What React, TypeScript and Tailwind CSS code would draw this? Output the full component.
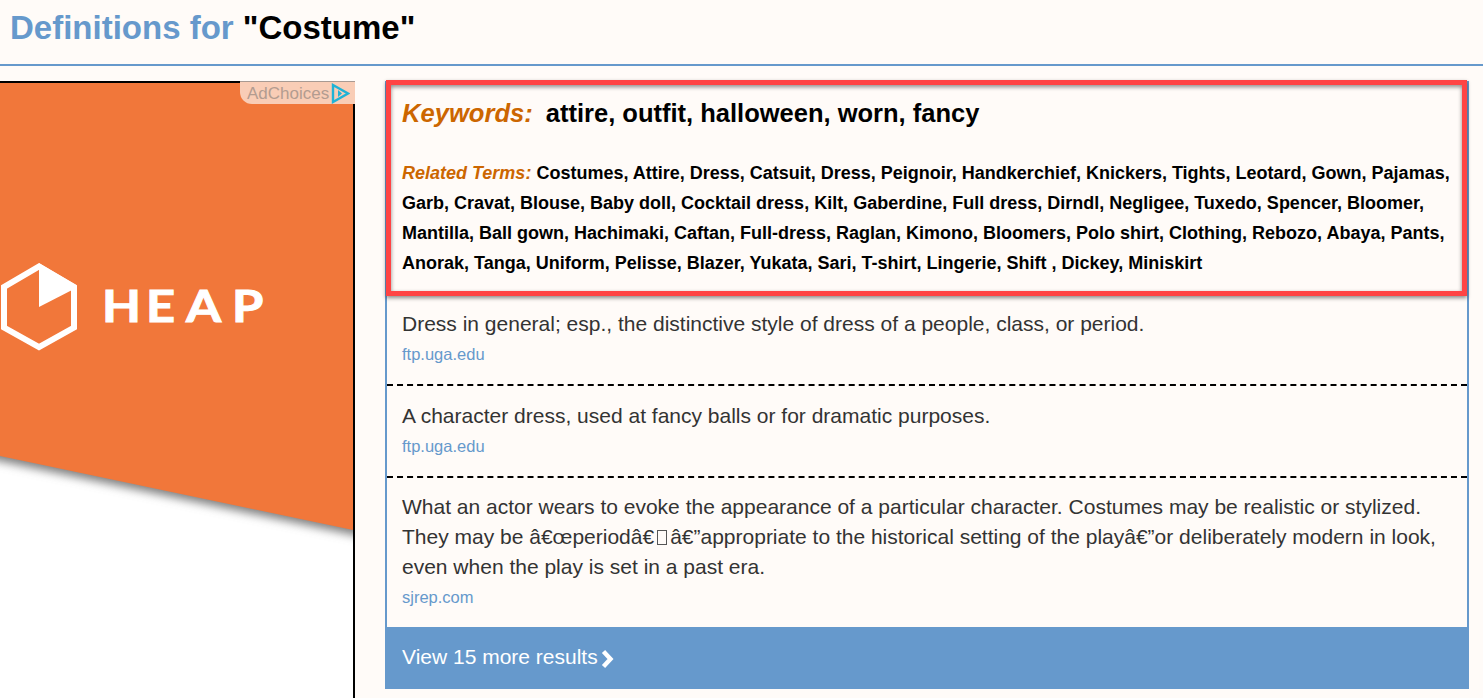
// App.tsx
import type { ReactNode } from 'react'

const RELATED = 'Costumes, Attire, Dress, Catsuit, Dress, Peignoir, Handkerchief, Knickers, Tights, Leotard, Gown, Pajamas, Garb, Cravat, Blouse, Baby doll, Cocktail dress, Kilt, Gaberdine, Full dress, Dirndl, Negligee, Tuxedo, Spencer, Bloomer, Mantilla, Ball gown, Hachimaki, Caftan, Full-dress, Raglan, Kimono, Bloomers, Polo shirt, Clothing, Rebozo, Abaya, Pants, Anorak, Tanga, Uniform, Pelisse, Blazer, Yukata, Sari, T-shirt, Lingerie, Shift , Dickey, Miniskirt'

const DEFS: { text: ReactNode; source: string }[] = [
  {
    text: 'Dress in general; esp., the distinctive style of dress of a people, class, or period.',
    source: 'ftp.uga.edu',
  },
  {
    text: 'A character dress, used at fancy balls or for dramatic purposes.',
    source: 'ftp.uga.edu',
  },
  {
    text: (
      <>
        What an actor wears to evoke the appearance of a particular character. Costumes may be realistic or stylized. They may be â€œperiodâ€
        {/* missing-glyph box from the broken encoding */}
        <span className="inline-block w-[10px] h-[15px] mx-[3px] border border-[#555] align-[-1px]" />
        â€”appropriate to the historical setting of the playâ€”or deliberately modern in look, even when the play is set in a past era.
      </>
    ),
    source: 'sjrep.com',
  },
]

function HeapAd() {
  return (
    <aside className="relative w-[355px] shrink-0 h-[617px] bg-white border-t-2 border-r-2 border-black">
      <svg width="353" height="615" viewBox="0 0 353 615" className="block">
        <defs>
          <filter id="adShadow" x="-10%" y="-20%" width="120%" height="140%">
            <feGaussianBlur stdDeviation="5" />
          </filter>
          <clipPath id="adClip">
            <rect x="0" y="0" width="353" height="615" />
          </clipPath>
        </defs>
        <g clipPath="url(#adClip)">
          <polygon points="-20,350 373,432 373,456 -20,374" fill="#808080" filter="url(#adShadow)" />
          <polygon points="0,-2 353,-2 353,447 0,373" fill="#f1773a" />
        </g>
        <path d="M39 183.5 L74 204 L74 244.5 L39 264 L4 244.5 L4 204 Z" fill="none" stroke="#fff" strokeWidth="6" />
        <path d="M39 180 L76 202 L76 205 L39 224 Z" fill="#fff" />
        <text
          transform="translate(0 239) scale(1.15 1)"
          x="88.7 127 161.7 201.7"
          y="0"
          fill="#fff"
          stroke="#fff"
          strokeWidth="1"
          fontSize="44"
          fontWeight="700"
          fontFamily="Lato, sans-serif"
        >
          HEAP
        </text>
      </svg>
      <div className="absolute -top-[2px] -right-[2px] w-[115px] h-[23px] pl-[7px] flex items-center bg-[#f9cdb6] border-t border-[#a89a92] rounded-bl-xl text-[17px] leading-none text-[#b39c90]">
        <span>AdChoices</span>
        <svg width="19" height="21" viewBox="0 0 19 21" className="ml-[2px]">
          <path d="M2 2 L17 10.5 L2 19 Z" fill="none" stroke="#1fb3d6" strokeWidth="2.4" />
          <path d="M7 7 L11 10.5 L7 14 Z" fill="#1fb3d6" />
        </svg>
      </div>
    </aside>
  )
}

export default function App() {
  return (
    <div className="h-[698px] overflow-hidden bg-[#fffbf8] font-['Liberation_Sans',Arial,sans-serif]">
      <header className="h-[66px] border-b-2 border-[#6699cc] pl-[10px] pt-[8px]">
        <h1 className="text-[33px] leading-[40px] font-bold text-[#6699cc]">
          Definitions for <span className="text-black">"Costume"</span>
        </h1>
      </header>

      <div className="flex pt-[15px]">
        <HeapAd />

        <main className="ml-[30px] w-[1084px]">
          <div className="border-x-2 border-t-2 border-[#6699cc]">
            <section className="relative h-[211px] border-b-2 border-dashed border-black pl-[15px] pt-[15px]">
              <p className="text-[25.6px] leading-[30px] font-bold text-black">
                <em className="text-[#cc6600]">Keywords:</em>
                <span className="ml-[13px] text-[25.5px]">attire, outfit, halloween, worn, fancy</span>
              </p>
              <p className="mt-[30px] w-[1055px] text-[18px] leading-[30px] font-bold text-black">
                <em className="text-[#cc6600]">Related Terms:</em> {RELATED}
              </p>
              {/* red annotation over the keyword block */}
              <div className="absolute -top-[3px] -left-[1px] w-[1081px] h-[216px] border-[5px] border-[#ff4444] shadow-[0_2px_4px_rgba(0,0,0,0.45),inset_0_2px_4px_rgba(0,0,0,0.45)]" />
            </section>

            {DEFS.map((def, i) => (
              <div
                key={i}
                className={i < DEFS.length - 1 ? 'border-b-2 border-dashed border-black px-[15px] py-[15px]' : 'px-[15px] pt-[14px] pb-[15px]'}
              >
                <p className="text-[21px] leading-[30px] text-[#333333]">{def.text}</p>
                <p className="text-[16.5px] leading-[30px] text-[#6699cc]">{def.source}</p>
              </div>
            ))}
          </div>

          <a className="flex items-center h-[62px] pl-[17px] pb-[2px] bg-[#6699cc] text-[21px] text-white">
            View 15 more results
            <svg width="13" height="18" viewBox="0 0 13 18" className="ml-[3px] mt-[3px]">
              <path d="M2.5 1.5 L9.5 9 L2.5 16.5" fill="none" stroke="#fff" strokeWidth="4.4" />
            </svg>
          </a>
        </main>
      </div>
    </div>
  )
}
